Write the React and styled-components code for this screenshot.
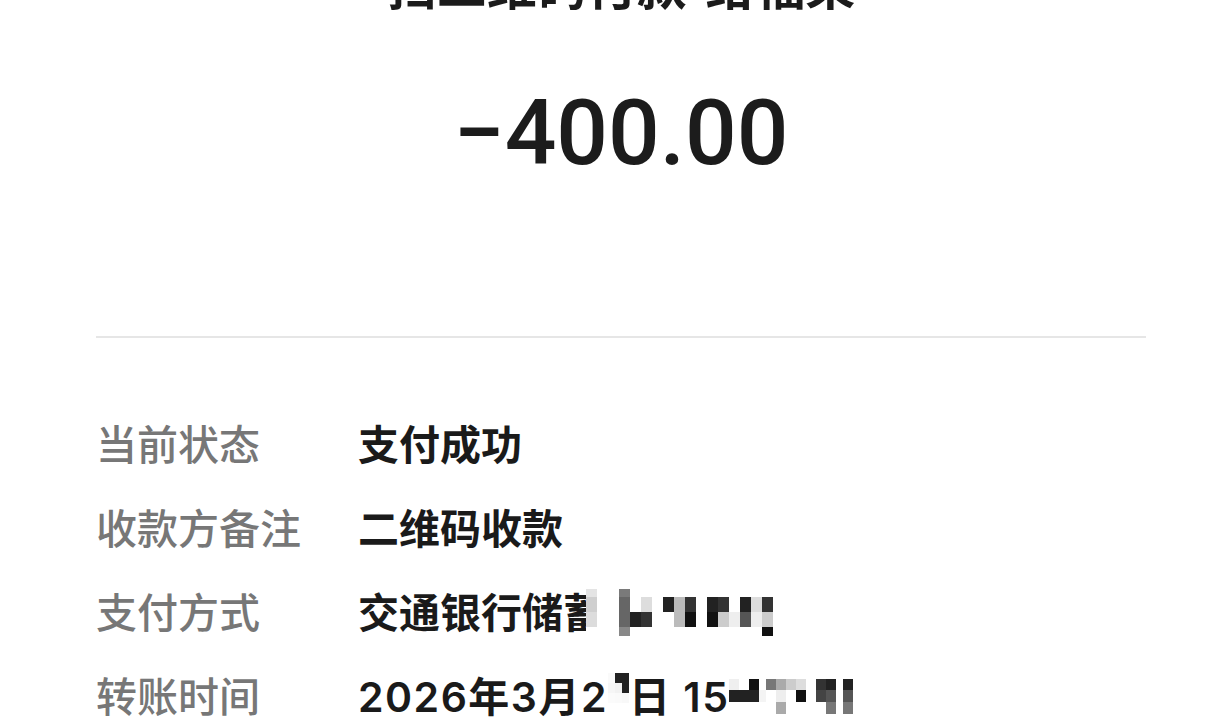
import React from "react";
import styled, { createGlobalStyle } from "styled-components";

const Global = createGlobalStyle`
  html, body { margin: 0; padding: 0; background: #ffffff; }
  body { font-family: "Noto Sans CJK SC", "Noto Sans", sans-serif; overflow: hidden; }
`;

const Page = styled.div`
  width: 1218px;
  height: 726px;
  box-sizing: border-box;
  padding: 0 72px 0 96px;
  overflow: hidden;
  display: flex;
  flex-direction: column;
`;

const Title = styled.div`
  margin-top: -45px;
  height: 56px;
  line-height: 56px;
  font-size: 50px;
  font-weight: 700;
  color: #1b1b1b;
  text-align: center;
  white-space: nowrap;
`;

const Amount = styled.div`
  margin-top: 74px;
  height: 96px;
  line-height: 96px;
  font-family: Roboto, "Noto Sans", sans-serif;
  font-size: 91px;
  font-weight: 500;
  color: #1c1c1c;
  text-align: center;
`;

const Divider = styled.hr`
  margin: 155px 0 0 0;
  border: none;
  border-top: 2px solid #e6e6e6;
  height: 0;
`;

const Details = styled.div`
  margin-top: 62px;
  display: grid;
  grid-template-columns: 262px 1fr;
  grid-auto-rows: 84px;
  align-items: center;
`;

const Label = styled.div`
  font-size: 41px;
  font-weight: 500;
  color: #777777;
  white-space: nowrap;
`;

const Value = styled.div`
  font-family: Inter, "Noto Sans CJK SC", sans-serif;
  font-size: 41px;
  font-weight: 600;
  letter-spacing: ${(p) => p.$ls || 0}px;
  color: #1a1a1a;
  white-space: nowrap;
  display: flex;
  align-items: center;
`;

const Mosaic = styled.span`
  display: inline-grid;
  grid-template-columns: ${(p) => p.$cols};
  grid-template-rows: ${(p) => p.$rows};
  margin-left: ${(p) => p.$ml || 0}px;
  margin-right: ${(p) => p.$mr || 0}px;
  transform: translateY(${(p) => p.$dy || 0}px);
`;

const Cell = styled.span`
  background: ${(p) => p.$c};
`;

function Pixels({ cols, rows, data, ml, mr, dy }) {
  return (
    <Mosaic $cols={cols} $rows={rows} $ml={ml} $mr={mr} $dy={dy}>
      {data.flat().map((c, i) => (
        <Cell key={i} $c={c} />
      ))}
    </Mosaic>
  );
}

const W = "#ffffff";

const cardMosaic = [
  ["#e4e4e4", W, W, "#7a7a7a", W, W, W, W, W, W, W, W, W, W, W, W, W],
  ["#cfcfcf", W, W, "#666", W, "#ddd", W, "#222", "#bbb", "#333", W, "#222", "#333", W, "#222", "#ddd", "#333"],
  ["#dcdcdc", W, W, "#666", "#222", "#333", W, W, "#bbb", "#111", W, "#111", "#ccc", "#eee", "#555", "#eee", "#ccc"],
  [W, W, W, "#888", W, W, W, W, W, W, W, W, W, W, W, W, "#111"],
];

const dayMosaic = [
  ["#fafafa", "#222", "#222"],
  ["#f6f6f6", "#f2f2f2", "#222"],
  ["#fbfbfb", "#fafafa", "#f8f8f8"],
];

const timeMosaic = [
  ["#efefef", W, "#111", W, "#777", "#aaa", "#ccc", "#ddd", W, "#333", "#222", W, "#222"],
  ["#222", "#222", "#222", "#f4f4f4", W, "#eee", W, "#111", W, "#444", "#555", W, "#555"],
  [W, W, W, W, W, "#aaa", W, W, W, W, "#777", W, "#777"],
];

const rows = [
  { label: "当前状态", value: "支付成功" },
  { label: "收款方备注", value: "二维码收款" },
  {
    label: "支付方式",
    value: (
      <>
        交通银行储蓄
        <Pixels
          cols="repeat(17, 11px)"
          rows="8px 15px 15px 9px"
          data={cardMosaic}
          ml={-18}
          dy={2}
        />
      </>
    ),
  },
  {
    label: "转账时间",
    ls: 1.5,
    value: (
      <>
        2026年3月2
        <Pixels cols="repeat(3, 7px)" rows="10px 10px 10px" data={dayMosaic} dy={-6} />
        日 15
        <Pixels
          cols="10px 10px 10px 7px 10px 10px 10px 10px 10px 10px 10px 7px 10px"
          rows="11px 12px 12px"
          data={timeMosaic}
          ml={0}
          dy={2}
        />
      </>
    ),
  },
];

export default function App() {
  return (
    <>
      <Global />
      <Page>
        <Title>扫二维码付款-给福果</Title>
        <Amount>−400.00</Amount>
        <Divider />
        <Details>
          {rows.map((r) => (
            <React.Fragment key={r.label}>
              <Label>{r.label}</Label>
              <Value $ls={r.ls}>{r.value}</Value>
            </React.Fragment>
          ))}
        </Details>
      </Page>
    </>
  );
}
